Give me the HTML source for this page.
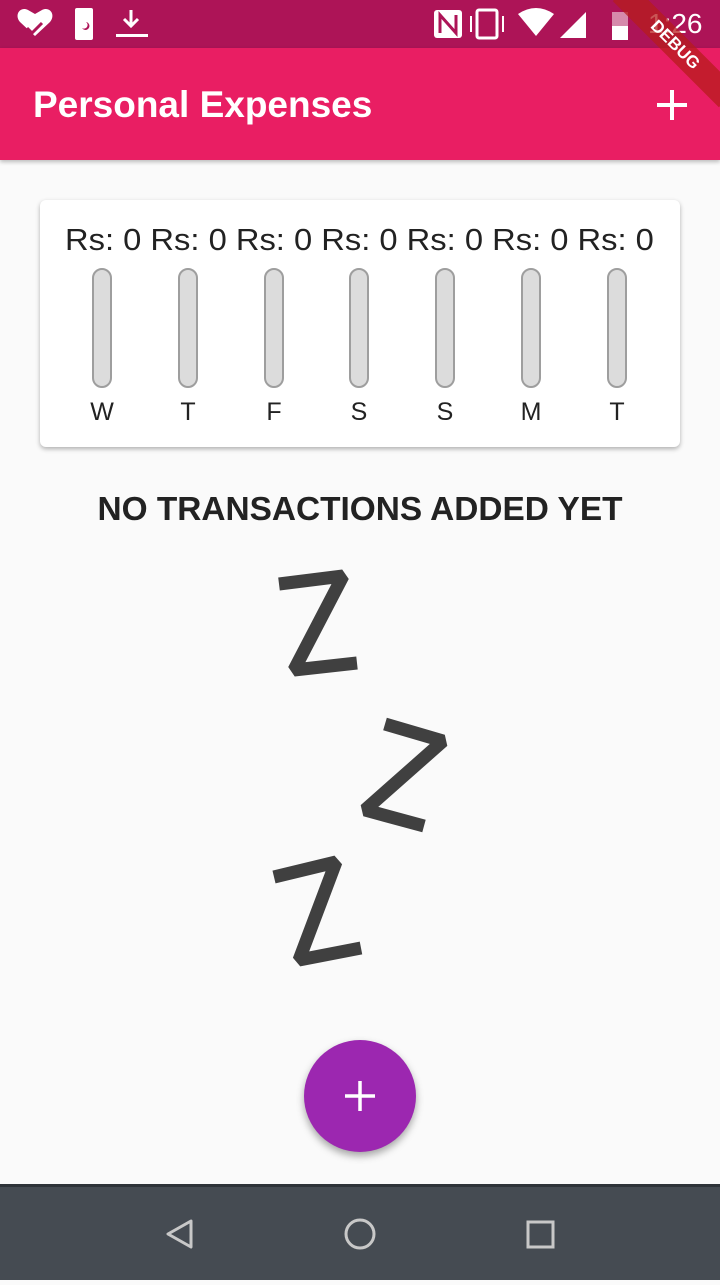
<!DOCTYPE html>
<html><head><meta charset="utf-8"><style>
*{margin:0;padding:0;box-sizing:border-box}
body{width:720px;height:1280px;position:relative;background:#fafafa;font-family:"Liberation Sans",sans-serif;overflow:hidden}
.status{position:absolute;top:0;left:0;width:720px;height:48px;background:#ad1457}
.appbar{position:absolute;top:48px;left:0;width:720px;height:112px;background:#e91e63;box-shadow:0 2px 4px rgba(0,0,0,.25)}
.title{position:absolute;left:33px;top:36px;color:#fff;font-size:37px;font-weight:bold}
.card{position:absolute;left:40px;top:200px;width:640px;height:247px;background:#fff;border-radius:6px;box-shadow:0 2px 5px rgba(0,0,0,.3)}
.amt{position:absolute;top:222px;left:65px;font-size:31px;color:#222;white-space:nowrap;transform-origin:0 0;transform:scaleX(1.055)}
.bar{position:absolute;top:268px;width:20px;height:120px;background:#dcdcdc;border:2px solid #9e9e9e;border-radius:10px}
.day{position:absolute;top:398px;font-size:25px;color:#222;width:40px;text-align:center}
.msg{position:absolute;top:491px;left:0;width:720px;text-align:center;font-size:33.4px;font-weight:bold;color:#222}
.fab{position:absolute;left:304px;top:1040px;width:112px;height:112px;border-radius:50%;background:#9c27b0;box-shadow:0 4px 8px rgba(0,0,0,.35)}
.nav{position:absolute;top:1184px;left:0;width:720px;height:96px;background:#454b52;border-top:3px solid #2e3338}
</style></head><body>
<div class="status">
<svg width="720" height="48" style="position:absolute;left:0;top:0">
<path d="M35 36 L20 22 C14 15 20 6 28 10 L35 14 L42 10 C50 6 56 15 50 22 Z" fill="#fff"/>
<path d="M27 28 l5 5 l10 -10" stroke="#ad1457" stroke-width="3" fill="none"/>
<rect x="75" y="8" width="18" height="32" rx="2" fill="#fff"/>
<path d="M86 22 a4 4 0 1 1 -4 6 a3 3 0 0 0 4 -6z" fill="#ad1457"/>
<path d="M131 10 v14 M124 19 l7 7 l7 -7" stroke="#fff" stroke-width="3" fill="none"/>
<rect x="116" y="34" width="32" height="3" fill="#fff"/>
<rect x="434" y="10" width="28" height="28" rx="3" fill="#fff"/>
<path d="M440 33 V15 L456 33 V15" stroke="#ad1457" stroke-width="3" fill="none"/>
<rect x="477" y="10" width="20" height="28" rx="2" fill="none" stroke="#fff" stroke-width="3"/>
<path d="M471 16 v16 M503 16 v16" stroke="#fff" stroke-width="2"/>
<path d="M518 14 Q536 2 554 14 L536 36 Z" fill="#fff"/>
<path d="M586 12 V38 H560 Z" fill="#fff"/>
<rect x="612" y="12" width="16" height="28" fill="#fff" opacity=".5"/>
<rect x="612" y="26" width="16" height="14" fill="#fff"/>
</svg>
<div style="position:absolute;left:648px;top:8px;color:#fff;font-size:28px">1:26</div>
</div>
<div class="appbar"><div class="title">Personal Expenses</div>
<svg width="40" height="40" style="position:absolute;left:652px;top:37px"><path d="M20 5 V35 M5 20 H35" stroke="#fff" stroke-width="4"/></svg>
</div>
<div style="position:absolute;left:600px;top:0;width:120px;height:120px;overflow:hidden">
<div style="position:absolute;left:0;top:32px;width:150px;height:26px;background:rgba(183,28,28,.75);transform:rotate(45deg);color:#fff;font-size:17px;font-weight:bold;text-align:center;line-height:26px">DEBUG</div></div>
<div class="card"></div>
<div class="amt">Rs: 0 Rs: 0 Rs: 0 Rs: 0 Rs: 0 Rs: 0 Rs: 0</div>
<div class="bar" style="left:92px"></div><div class="bar" style="left:178px"></div><div class="bar" style="left:264px"></div><div class="bar" style="left:349px"></div><div class="bar" style="left:435px"></div><div class="bar" style="left:521px"></div><div class="bar" style="left:607px"></div>
<div class="day" style="left:82px">W</div><div class="day" style="left:168px">T</div><div class="day" style="left:254px">F</div><div class="day" style="left:339px">S</div><div class="day" style="left:425px">S</div><div class="day" style="left:511px">M</div><div class="day" style="left:597px">T</div>
<div class="msg">NO TRANSACTIONS ADDED YET</div>
<svg width="720" height="1280" style="position:absolute;left:0;top:0">
<g fill="none" stroke="#404040" stroke-width="13" stroke-linejoin="bevel">
<polyline points="279,584 343,576 294,670 357,663"/>
<polyline points="385,724 443,741 365,810 424,826"/>
<polyline points="274,877 336,862 299,960 361,948"/>
</g>
</svg>
<div class="fab"><svg width="112" height="112"><path d="M56 41 V71 M41 56 H71" stroke="#fff" stroke-width="3.5"/></svg></div>
<div class="nav"><svg width="720" height="93">
<path d="M191 34 L168 47 L191 60 Z" fill="none" stroke="#c8c8c8" stroke-width="3" stroke-linejoin="round"/>
<circle cx="360" cy="47" r="14" fill="none" stroke="#c8c8c8" stroke-width="3"/>
<rect x="528" y="35" width="25" height="25" fill="none" stroke="#c8c8c8" stroke-width="3"/>
</svg></div>
</body></html>
